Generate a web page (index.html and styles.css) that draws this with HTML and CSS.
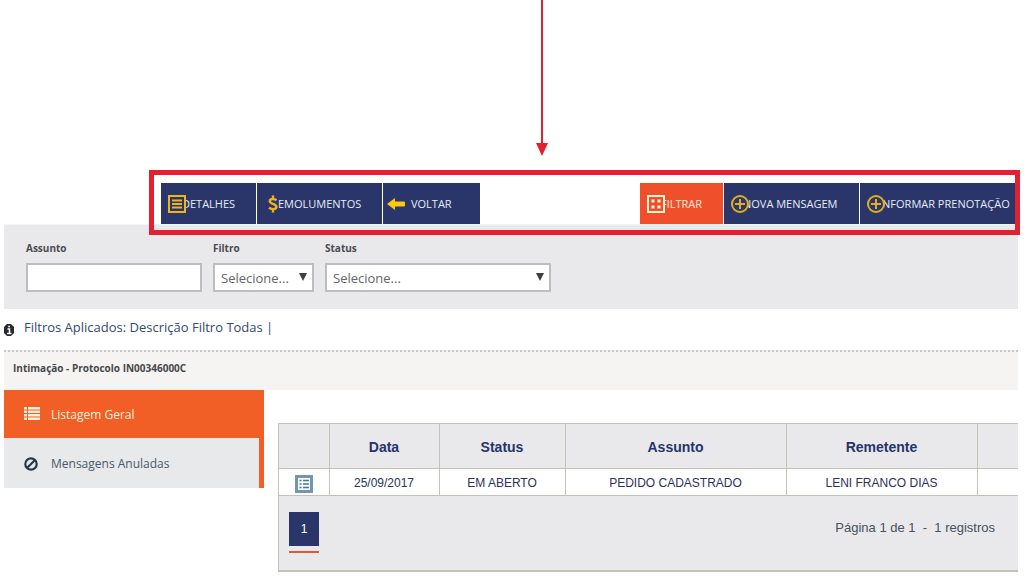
FILE: index.html
```html
<!DOCTYPE html>
<html lang="pt-BR">
<head>
<meta charset="utf-8">
<meta name="viewport" content="width=device-width, initial-scale=1">
<title>Intimação - Protocolo IN00346000C</title>
<link rel="stylesheet" href="styles.css">
</head>
<body>
<div class="callout" aria-hidden="true">
  <svg class="callout-arrow" width="12" height="156" viewBox="0 0 12 156"><path d="M5 0h2v143h5L6 156 0 143h5z" fill="#e3202f"/></svg>
  <div class="callout-box"></div>
</div>
<main class="page">
  <div class="toolbar">
    <button type="button" class="btn btn-detalhes"><svg class="btn-icon" viewBox="0 0 18 18"><rect x="1" y="1" width="16" height="16" fill="#2a3669" stroke="#efb31c" stroke-width="2"/><path d="M4 5.5h10M4 9h10M4 12.5h10" stroke="#efb31c" stroke-width="1.8"/></svg><span>DETALHES</span></button>
    <button type="button" class="btn btn-emolumentos"><svg class="btn-icon" viewBox="0 0 18 18"><path d="M12.500 5.300C11 3.800 5.800 3.200 5.800 6.200 5.800 9.300 12.400 8.300 12.400 11.700 12.400 14.800 7 14.700 5 12.700M9 .5v3M9 14.500v3" fill="none" stroke="#efb31c" stroke-width="2.400"/></svg><span>EMOLUMENTOS</span></button>
    <button type="button" class="btn btn-voltar"><svg class="btn-icon" viewBox="0 0 18 18"><path d="M0 9l8-6v3.500h9q1 0 1 1v3q0 1-1 1H8V15z" fill="#fcc70f"/></svg><span>VOLTAR</span></button>
    <div class="spacer"></div>
    <button type="button" class="btn btn-filtrar"><svg class="btn-icon" viewBox="0 0 18 18"><rect x="1" y="1" width="16" height="16" fill="#f04f2b" stroke="#fff3d8" stroke-width="2"/><path d="M4.500 4.500h3v3h-3zM10.500 4.500h3v3h-3zM4.500 10.500h3v3h-3zM10.500 10.500h3v3h-3z" fill="#fff3d8"/></svg><span>FILTRAR</span></button>
    <button type="button" class="btn btn-nova"><svg class="btn-icon" viewBox="0 0 18 18"><circle cx="9" cy="9" r="8" fill="#2a3669" stroke="#e5ae22" stroke-width="2"/><path d="M9 4v10M4 9h10" stroke="#e5ae22" stroke-width="2"/></svg><span>NOVA MENSAGEM</span></button>
    <button type="button" class="btn btn-informar"><svg class="btn-icon" viewBox="0 0 18 18"><circle cx="9" cy="9" r="8" fill="#2a3669" stroke="#e5ae22" stroke-width="2"/><path d="M9 4v10M4 9h10" stroke="#e5ae22" stroke-width="2"/></svg><span>INFORMAR PRENOTAÇÃO</span></button>
  </div>
  <form class="filters">
    <div class="field field-assunto"><label for="assunto">Assunto</label><input id="assunto" type="text"></div>
    <div class="field field-filtro"><label for="filtro">Filtro</label><div class="select"><select id="filtro"><option>Selecione...</option></select></div></div>
    <div class="field field-status"><label for="status">Status</label><div class="select"><select id="status"><option>Selecione...</option></select></div></div>
  </form>
  <p class="applied"><svg width="10" height="12" viewBox="0 0 10 12"><path d="M3 0h4l3 3v6l-3 3H3L0 9V3z" fill="#26292e"/><path d="M3.500 5H5.500v4M3 9.500h4.500M4.200 2.500h1.800" fill="none" stroke="#fff" stroke-width="1.500"/></svg><span>Filtros Aplicados: Descrição Filtro Todas |</span></p>
  <h1 class="title">Intimação - Protocolo IN00346000C</h1>
  <div class="content">
    <nav class="menu">
      <a href="#geral" class="menu-item active"><svg width="16" height="13" viewBox="0 0 16 13"><path d="M0 0h3v2.500H0zM4 0h12v2.500H4zM0 3.500h3V6H0zM4 3.500h12V6H4zM0 7h3v2.500H0zM4 7h12v2.500H4zM0 10.500h3V13H0zM4 10.500h12V13H4z" fill="#fff0dc"/></svg><span>Listagem Geral</span></a>
      <a href="#anuladas" class="menu-item"><svg width="14" height="14" viewBox="0 0 14 14"><circle cx="7" cy="7" r="5.700" fill="none" stroke="#263746" stroke-width="2.200"/><path d="M3 11l8-8" stroke="#263746" stroke-width="2.200"/></svg><span>Mensagens Anuladas</span></a>
    </nav>
    <section class="listing">
      <table class="grid">
        <colgroup><col class="c-icon"><col class="c-data"><col class="c-status"><col class="c-assunto"><col class="c-remetente"><col></colgroup>
        <thead><tr><th></th><th>Data</th><th>Status</th><th>Assunto</th><th>Remetente</th><th></th></tr></thead>
        <tbody><tr>
          <td><button type="button" class="row-btn" aria-label="Detalhes da mensagem"><svg width="18" height="18" viewBox="0 0 18 18"><rect x="1.500" y="1.500" width="15" height="15" fill="#f4fafd" stroke="#7395b0" stroke-width="3"/><path d="M4.500 5.500h2M4.500 9h2M4.500 12.500h2M8 5.500h6M8 9h6M8 12.500h6" stroke="#4e7590" stroke-width="1.700"/></svg></button></td>
          <td>25/09/2017</td><td>EM ABERTO</td><td>PEDIDO CADASTRADO</td><td>LENI FRANCO DIAS</td><td></td>
        </tr></tbody>
      </table>
      <div class="pager"><a href="#p1" class="page-link" aria-current="page"><span>1</span></a><span class="count">Página 1 de 1&nbsp; -&nbsp; 1 registros</span></div>
    </section>
  </div>
</main>
</body>
</html>
```
FILE: styles.css
```css
* { box-sizing: border-box; }
body {
  margin: 0;
  background: #fff;
  font-family: "Open Sans", "Noto Sans", sans-serif;
  position: relative;
}
svg { display: block; flex: none; }
.page { padding: 183px 6px 0 4px; }

.callout-arrow { position: absolute; top: 0; left: 536px; }
.callout-box {
  position: absolute;
  top: 170px;
  left: 149px;
  right: 4px;
  height: 65px;
  border: 5px solid #e3202f;
  pointer-events: none;
}

.toolbar { display: flex; gap: 1px; padding: 0 2px 0 157px; }
.spacer { flex: 1; }
.btn {
  display: flex;
  align-items: center;
  flex: none;
  height: 41px;
  margin: 0;
  padding: 0 0 0 7px;
  border: 0;
  background: #2a3669;
  color: #e6ebf7;
  font: 11px/16px "Open Sans", sans-serif;
  white-space: nowrap;
}
.btn-icon { width: 18px; height: 18px; position: relative; z-index: 1; }
.btn span { margin-left: -4px; }
.btn-detalhes { width: 95px; }
.btn-emolumentos { width: 125px; }
.btn-voltar { width: 97px; padding-left: 4px; }
.btn-voltar span { margin-left: 6px; }
.btn-filtrar { width: 83px; background: #f04f2b; color: #ffe9d6; }
.btn-nova { width: 135px; }
.btn-informar { width: 156px; }
.btn-nova span, .btn-informar span { margin-left: -6px; }

.filters {
  display: flex;
  gap: 11px;
  margin: 0;
  padding: 16px 22px 17px;
  border-top: 1px solid #f3f3f4;
  background: #e9e9eb;
}
.field { display: flex; flex-direction: column; gap: 8px; }
.field label { font-size: 10px; line-height: 14px; font-weight: 700; color: #4b4b50; }
.field-assunto { width: 176px; }
.field-filtro { width: 101px; }
.field-status { width: 226px; }
.field input, .field select {
  display: block;
  width: 100%;
  height: 29px;
  margin: 0;
  padding: 0 6px;
  border: 2px solid #bdbdbf;
  border-radius: 0;
  background: #fff;
  color: #66666a;
  font: 13px/20px "Open Sans", sans-serif;
  appearance: none;
}
.select { position: relative; }
.select::after {
  content: "";
  position: absolute;
  right: 7px;
  top: 10px;
  border: 4px solid transparent;
  border-top: 8px solid #3f3f43;
  border-bottom: 0;
  pointer-events: none;
}

.applied {
  display: flex;
  align-items: center;
  gap: 10px;
  margin: 0;
  padding-bottom: 5px;
  height: 41px;
  font-size: 13px;
  line-height: 20px;
  color: #324a6d;
}
.applied svg { margin-top: 6px; }
.title {
  margin: 0;
  padding: 7px 9px 13px;
  border-top: 2px dotted #c6c6c6;
  background: #f5f4f2;
  color: #47474a;
  font-size: 10px;
  line-height: 18px;
  font-weight: 700;
}

.content { display: flex; gap: 14px; }
.menu { width: 260px; flex: none; border-right: 5px solid #f15f26; background: #e7e9eb; align-self: flex-start; }
.menu-item {
  display: flex;
  align-items: center;
  height: 50px;
  padding: 2px 0 0 20px;
  color: #47596a;
  font-size: 12px;
  line-height: 18px;
  text-decoration: none;
}
.menu-item svg { margin-right: 13px; }
.menu-item.active { height: 48px; background: #f15f26; color: #fff0dc; }
.menu-item.active svg { margin-right: 11px; margin-bottom: 4px; }

.listing {
  flex: 1;
  min-width: 0;
  margin-top: 33px;
  border: 1px solid #c3c3b8;
  border-right: 0;
  border-bottom-width: 2px;
  background: #e9e9eb;
  font-family: "Liberation Sans", Arial, sans-serif;
}
.grid { width: 100%; table-layout: fixed; border-collapse: collapse; }
.grid th, .grid td {
  padding: 0;
  text-align: center;
  border-right: 1px solid #c3c3b8;
  border-bottom: 1px solid #c3c3b8;
}
.grid th:last-child, .grid td:last-child { border-right: 0; }
.grid th { height: 44px; padding-top: 2px; font-size: 14px; line-height: 18px; color: #25346b; }
.grid td { height: 27px; padding-top: 2px; background: #fff; font-size: 12px; line-height: 18px; color: #2b3456; }
.c-icon { width: 50px; }
.c-data { width: 110px; }
.c-status { width: 126px; }
.c-assunto { width: 221px; }
.c-remetente { width: 191px; }
.row-btn { display: block; margin: 3px auto 0; padding: 0; border: 0; background: none; }

.pager { display: flex; justify-content: space-between; align-items: flex-start; padding: 16px 23px 17px 10px; }
.page-link {
  width: 30px;
  padding-bottom: 5px;
  border-bottom: 2px solid #e2592f;
  color: #fff;
  font-size: 12px;
  line-height: 34px;
  text-align: center;
  text-decoration: none;
}
.page-link span { display: block; background: #2a3669; }
.count { font-size: 13px; line-height: 32px; color: #46515c; }
```
